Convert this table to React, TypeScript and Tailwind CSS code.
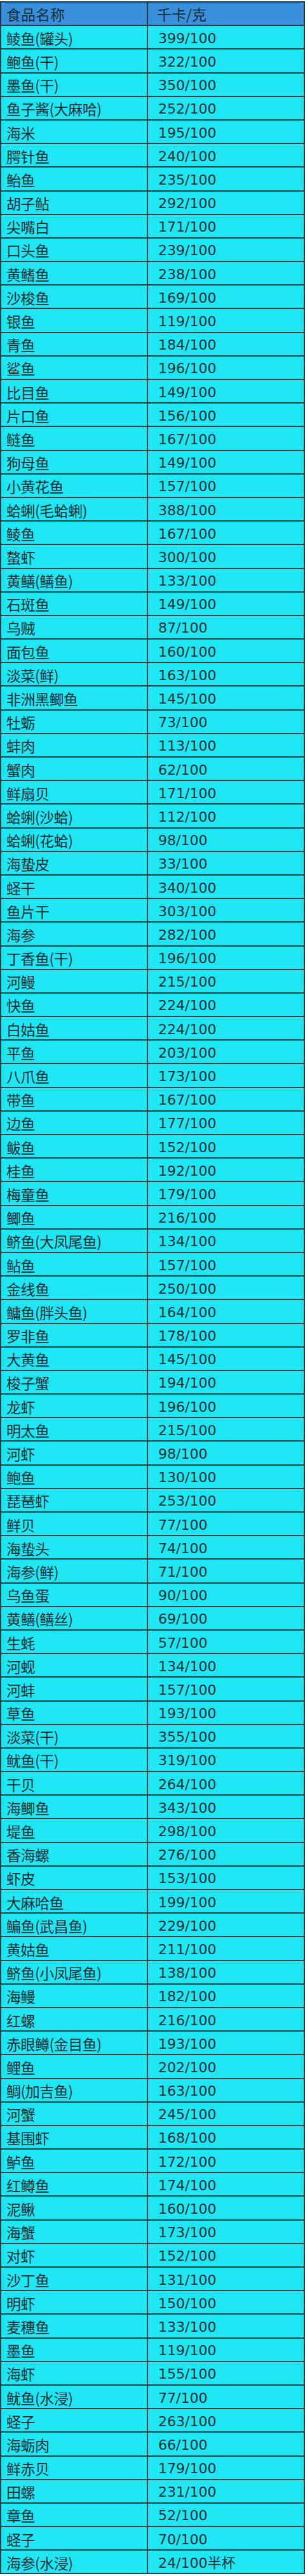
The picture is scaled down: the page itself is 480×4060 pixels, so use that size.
import React from "react";

const rows: [string, string][] = [
  ["鲮鱼(罐头)", "399/100"],
  ["鲍鱼(干)", "322/100"],
  ["墨鱼(干)", "350/100"],
  ["鱼子酱(大麻哈)", "252/100"],
  ["海米", "195/100"],
  ["腭针鱼", "240/100"],
  ["鲐鱼", "235/100"],
  ["胡子鲇", "292/100"],
  ["尖嘴白", "171/100"],
  ["口头鱼", "239/100"],
  ["黄鳍鱼", "238/100"],
  ["沙梭鱼", "169/100"],
  ["银鱼", "119/100"],
  ["青鱼", "184/100"],
  ["鲨鱼", "196/100"],
  ["比目鱼", "149/100"],
  ["片口鱼", "156/100"],
  ["鲢鱼", "167/100"],
  ["狗母鱼", "149/100"],
  ["小黄花鱼", "157/100"],
  ["蛤蜊(毛蛤蜊)", "388/100"],
  ["鲮鱼", "167/100"],
  ["螯虾", "300/100"],
  ["黄鳝(鳝鱼)", "133/100"],
  ["石斑鱼", "149/100"],
  ["乌贼", "87/100"],
  ["面包鱼", "160/100"],
  ["淡菜(鲜)", "163/100"],
  ["非洲黑鲫鱼", "145/100"],
  ["牡蛎", "73/100"],
  ["蚌肉", "113/100"],
  ["蟹肉", "62/100"],
  ["鲜扇贝", "171/100"],
  ["蛤蜊(沙蛤)", "112/100"],
  ["蛤蜊(花蛤)", "98/100"],
  ["海蛰皮", "33/100"],
  ["蛏干", "340/100"],
  ["鱼片干", "303/100"],
  ["海参", "282/100"],
  ["丁香鱼(干)", "196/100"],
  ["河鳗", "215/100"],
  ["快鱼", "224/100"],
  ["白姑鱼", "224/100"],
  ["平鱼", "203/100"],
  ["八爪鱼", "173/100"],
  ["带鱼", "167/100"],
  ["边鱼", "177/100"],
  ["鲅鱼", "152/100"],
  ["桂鱼", "192/100"],
  ["梅童鱼", "179/100"],
  ["鲫鱼", "216/100"],
  ["鲚鱼(大凤尾鱼)", "134/100"],
  ["鲇鱼", "157/100"],
  ["金线鱼", "250/100"],
  ["鳙鱼(胖头鱼)", "164/100"],
  ["罗非鱼", "178/100"],
  ["大黄鱼", "145/100"],
  ["梭子蟹", "194/100"],
  ["龙虾", "196/100"],
  ["明太鱼", "215/100"],
  ["河虾", "98/100"],
  ["鲍鱼", "130/100"],
  ["琵琶虾", "253/100"],
  ["鲜贝", "77/100"],
  ["海蛰头", "74/100"],
  ["海参(鲜)", "71/100"],
  ["乌鱼蛋", "90/100"],
  ["黄鳝(鳝丝)", "69/100"],
  ["生蚝", "57/100"],
  ["河蚬", "134/100"],
  ["河蚌", "157/100"],
  ["草鱼", "193/100"],
  ["淡菜(干)", "355/100"],
  ["鱿鱼(干)", "319/100"],
  ["干贝", "264/100"],
  ["海鲫鱼", "343/100"],
  ["堤鱼", "298/100"],
  ["香海螺", "276/100"],
  ["虾皮", "153/100"],
  ["大麻哈鱼", "199/100"],
  ["鳊鱼(武昌鱼)", "229/100"],
  ["黄姑鱼", "211/100"],
  ["鲚鱼(小凤尾鱼)", "138/100"],
  ["海鳗", "182/100"],
  ["红螺", "216/100"],
  ["赤眼鳟(金目鱼)", "193/100"],
  ["鲤鱼", "202/100"],
  ["鲷(加吉鱼)", "163/100"],
  ["河蟹", "245/100"],
  ["基围虾", "168/100"],
  ["鲈鱼", "172/100"],
  ["红鳟鱼", "174/100"],
  ["泥鳅", "160/100"],
  ["海蟹", "173/100"],
  ["对虾", "152/100"],
  ["沙丁鱼", "131/100"],
  ["明虾", "150/100"],
  ["麦穗鱼", "133/100"],
  ["墨鱼", "119/100"],
  ["海虾", "155/100"],
  ["鱿鱼(水浸)", "77/100"],
  ["蛏子", "263/100"],
  ["海蛎肉", "66/100"],
  ["鲜赤贝", "179/100"],
  ["田螺", "231/100"],
  ["章鱼", "52/100"],
  ["蛏子", "70/100"],
  ["海参(水浸)", "24/100半杯"],
];

const cjk = "font-['Noto_Sans_CJK_SC',sans-serif]";
const num = "font-['DejaVu_Sans','Noto_Sans_CJK_SC',sans-serif]";

export default function App() {
  return (
    <div className="w-[480px] bg-white pt-[2px]">
      <div className="border-x-2 border-t-2 border-[#163c44]">
        <div className="flex h-[37.2px] border-b-2 border-[#163c44] bg-[#3a8fdd] text-[#10303a]">
          <div className={`flex w-[231px] items-center border-r-2 border-[#163c44] pl-[8px] pt-[2px] text-[23px] ${cjk}`}>
            食品名称
          </div>
          <div className={`flex flex-1 items-center pl-[14px] pt-[2px] text-[23px] ${cjk}`}>
            千卡/克
          </div>
        </div>
        {rows.map(([name, val], i) => (
          <div
            key={i}
            className="flex h-[37.2px] border-b-2 border-[#163c44] bg-[#1ee6f3] text-[#0f2f36]"
          >
            <div className={`flex w-[231px] items-center whitespace-nowrap border-r-2 border-[#163c44] pl-[8px] pt-[3px] text-[23px] leading-none tracking-[-0.5px] ${cjk}`}>
              {name}
            </div>
            <div className={`flex flex-1 items-center whitespace-nowrap pl-[16px] pt-[4px] text-[22px] leading-none ${num}`}>
              {val}
            </div>
          </div>
        ))}
      </div>
    </div>
  );
}
